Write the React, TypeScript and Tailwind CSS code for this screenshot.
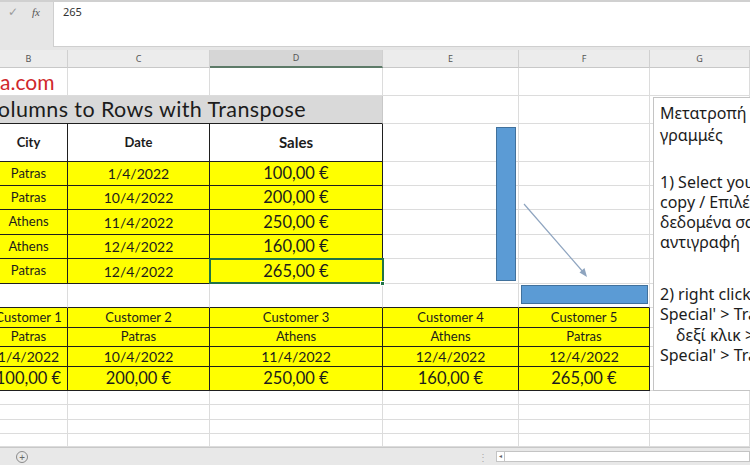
import clsx from "clsx";
import type { ReactNode } from "react";

const W = [
  "w-[78px] -ml-[10px]",
  "w-[142px]",
  "w-[173px]",
  "w-[136px]",
  "w-[131px]",
  "w-[100px]",
];

const CELL_FONT = "font-['Lato','Noto_Sans',sans-serif]";

type Kind = "grid" | "yellow" | "white";

function Cell({
  i,
  kind = "grid",
  className,
  children,
}: {
  i: number;
  kind?: Kind;
  className?: string;
  children?: ReactNode;
}) {
  return (
    <div
      className={clsx(
        "h-full shrink-0 flex items-center justify-center border-r border-b whitespace-nowrap overflow-hidden",
        W[i],
        kind === "grid" && "border-[#dcdcdc] bg-white",
        kind === "yellow" && "border-[#1f1f1f] bg-[#ffff00]",
        kind === "white" && "border-[#1f1f1f] bg-white",
        className
      )}
    >
      {children}
    </div>
  );
}

function Row({ h, children }: { h: string; children: ReactNode }) {
  return <div className={clsx("flex", h)}>{children}</div>;
}

function EmptyRow({ h, topBlack }: { h: string; topBlack?: number }) {
  return (
    <Row h={h}>
      {W.map((_, i) => (
        <Cell
          key={i}
          i={i}
          className={clsx(topBlack !== undefined && i <= topBlack && "border-b-[#1f1f1f]")}
        />
      ))}
    </Row>
  );
}

const DATA = [
  { city: "Patras", date: "1/4/2022", sales: "100,00 €", h: "h-[24px]" },
  { city: "Patras", date: "10/4/2022", sales: "200,00 €", h: "h-[24px]" },
  { city: "Athens", date: "11/4/2022", sales: "250,00 €", h: "h-[25px]" },
  { city: "Athens", date: "12/4/2022", sales: "160,00 €", h: "h-[24px]" },
  { city: "Patras", date: "12/4/2022", sales: "265,00 €", h: "h-[25px]" },
];

const TEXT = "text-[#1c1c1c]";

function FormulaBar() {
  return (
    <div className="h-[50px] bg-[#e6e6e6] flex flex-col">
      <div className="h-[2px] bg-[#d0d0d0]" />
      <div className="flex h-[45px]">
        <div className="w-[53px] flex items-start pt-[2px] gap-[14px] pl-[8px] text-[#9a9a9a]">
          <span className="text-[12px] leading-[16px] font-['DejaVu_Sans',sans-serif]">✓</span>
          <span className="text-[11px] leading-[16px] italic font-['Liberation_Serif',serif] text-[#555]">
            fx
          </span>
        </div>
        <div className="flex-1 bg-white border-l border-b border-[#cfcfcf] pl-[9px] pt-[3px] text-[11px] leading-[14px] text-[#333] font-['Noto_Sans',sans-serif]">
          265
        </div>
      </div>
    </div>
  );
}

function ColumnHeaders() {
  const letters = ["B", "C", "D", "E", "F", "G"];
  return (
    <div className="flex h-[18px] bg-[#ececec] font-['Noto_Sans',sans-serif] text-[9px] text-[#555]">
      {letters.map((l, i) => (
        <div
          key={l}
          className={clsx(
            "h-full shrink-0 flex items-center justify-center border-r border-[#d0d0d0]",
            W[i],
            i === 2 ? "bg-[#d6d6d6] border-b-2 border-b-[#5d7a68]" : "border-b border-b-[#c8c8c8]"
          )}
        >
          {l}
        </div>
      ))}
    </div>
  );
}

function Sheet() {
  return (
    <div className={clsx("relative", CELL_FONT)}>
      {/* row 1 */}
      <Row h="h-[28px]">
        <Cell i={0} className="justify-start pl-[10px]">
          <span className="text-[21px] text-[#d0282c]">a.com</span>
        </Cell>
        {[1, 2, 3, 4, 5].map((i) => (
          <Cell key={i} i={i} />
        ))}
      </Row>

      {/* title */}
      <Row h="h-[28px]">
        <div className="w-[393px] -ml-[10px] h-full shrink-0 flex items-center justify-end pr-[76px] overflow-hidden whitespace-nowrap bg-[#d9d9d9] border-b border-r border-b-[#1f1f1f] border-r-[#c8c8c8]">
          <span className="text-[21.5px] tracking-[0.4px] text-[#1c1c1c]">
            Columns to Rows with Transpose
          </span>
        </div>
        {[3, 4, 5].map((i) => (
          <Cell key={i} i={i} />
        ))}
      </Row>

      {/* header */}
      <Row h="h-[38px]">
        <Cell i={0} kind="white" className={clsx("font-bold text-[13px]", TEXT)}>
          City
        </Cell>
        <Cell i={1} kind="white" className={clsx("font-bold text-[13px]", TEXT)}>
          Date
        </Cell>
        <Cell i={2} kind="white" className={clsx("font-bold text-[15px]", TEXT)}>
          Sales
        </Cell>
        {[3, 4, 5].map((i) => (
          <Cell key={i} i={i} />
        ))}
      </Row>

      {DATA.map((d) => (
        <Row key={d.sales} h={d.h}>
          <Cell i={0} kind="yellow" className={clsx("text-[13px]", TEXT)}>
            {d.city}
          </Cell>
          <Cell i={1} kind="yellow" className={clsx("text-[14px]", TEXT)}>
            {d.date}
          </Cell>
          <Cell i={2} kind="yellow" className={clsx("text-[16.5px]", TEXT)}>
            {d.sales}
          </Cell>
          {[3, 4, 5].map((i) => (
            <Cell key={i} i={i} />
          ))}
        </Row>
      ))}

      <EmptyRow h="h-[24px]" topBlack={4} />

      {/* transposed */}
      <Row h="h-[20px]">
        {DATA.map((_, i) => (
          <Cell key={i} i={i} kind="yellow" className={clsx("text-[13px]", TEXT)}>
            Customer {i + 1}
          </Cell>
        ))}
        <Cell i={5} />
      </Row>
      <Row h="h-[19px]">
        {DATA.map((d, i) => (
          <Cell key={i} i={i} kind="yellow" className={clsx("text-[13px]", TEXT)}>
            {d.city}
          </Cell>
        ))}
        <Cell i={5} />
      </Row>
      <Row h="h-[20px]">
        {DATA.map((d, i) => (
          <Cell key={i} i={i} kind="yellow" className={clsx("text-[14px]", TEXT)}>
            {d.date}
          </Cell>
        ))}
        <Cell i={5} />
      </Row>
      <Row h="h-[24px]">
        {DATA.map((d, i) => (
          <Cell key={i} i={i} kind="yellow" className={clsx("text-[16.5px]", TEXT)}>
            {d.sales}
          </Cell>
        ))}
        <Cell i={5} />
      </Row>

      <EmptyRow h="h-[14px]" />
      <EmptyRow h="h-[15px]" />
      <EmptyRow h="h-[14px]" />
      <EmptyRow h="h-[13px]" />

      {/* active cell D8 */}
      <div className="absolute left-[209px] top-[190px] w-[175px] h-[26px] border-2 border-[#217346]" />
      <div className="absolute left-[380px] top-[213px] w-[5px] h-[5px] bg-[#217346] border border-white" />

      {/* shapes */}
      <div className="absolute left-[496px] top-[59px] w-[20px] h-[154px] bg-[#5b9bd5] border border-[#41719c]" />
      <div className="absolute left-[521px] top-[217px] w-[127px] h-[19px] bg-[#5b9bd5] border border-[#41719c]" />
      <svg className="absolute left-[520px] top-[130px]" width="80" height="82" viewBox="0 0 80 82">
        <line x1="4" y1="6" x2="64" y2="75" stroke="#8ea4bf" strokeWidth="1.2" />
        <path d="M67 79 L59.5 74.5 L64.5 70 Z" fill="#8ea4bf" />
      </svg>

      {/* text box */}
      <div className="absolute left-[653px] top-[29px] w-[130px] h-[294px] bg-white border border-[#c4c4c4] font-['Noto_Sans',sans-serif] text-[16px] text-[#1c1c1c] whitespace-nowrap overflow-hidden pl-[6px]">
        <div className="mt-[4px] leading-[22px]">
          <div>Μετατροπή στηλών σε</div>
          <div>γραμμές</div>
        </div>
        <div className="mt-[26px] leading-[20px]">
          <div>1) Select your data and</div>
          <div>copy / Επιλέξτε τα</div>
          <div>δεδομένα σας και</div>
          <div>αντιγραφή</div>
        </div>
        <div className="mt-[32px] leading-[20.4px]">
          <div>2) right click &gt; 'Paste</div>
          <div>Special' &gt; Transpose /</div>
          <div className="pl-[16px]">δεξί κλικ &gt; 'Paste</div>
          <div>Special' &gt; Transpose</div>
        </div>
      </div>
    </div>
  );
}

function StatusBar() {
  return (
    <div className="h-[18px] bg-[#e8e8e8] border-t border-[#c8c8c8] flex items-center relative">
      <div className="ml-[16px] w-[12px] h-[12px] rounded-full border border-[#8a8a8a] flex items-center justify-center text-[10px] leading-none text-[#666]">
        +
      </div>
      <div className="ml-auto flex items-center h-full">
        <span className="text-[10px] text-[#aaa] leading-none mr-[8px]">⋮</span>
        <div className="w-[9px] h-[11px] bg-white border border-[#c4c4c4] flex items-center justify-center text-[6px] text-[#666]">
          ◂
        </div>
        <div className="w-[245px] h-[11px] bg-white border border-l-0 border-[#c4c4c4]" />
      </div>
    </div>
  );
}

export default function App() {
  return (
    <div className="w-[750px] h-[465px] overflow-hidden bg-white relative">
      <FormulaBar />
      <ColumnHeaders />
      <Sheet />
      <StatusBar />
    </div>
  );
}
